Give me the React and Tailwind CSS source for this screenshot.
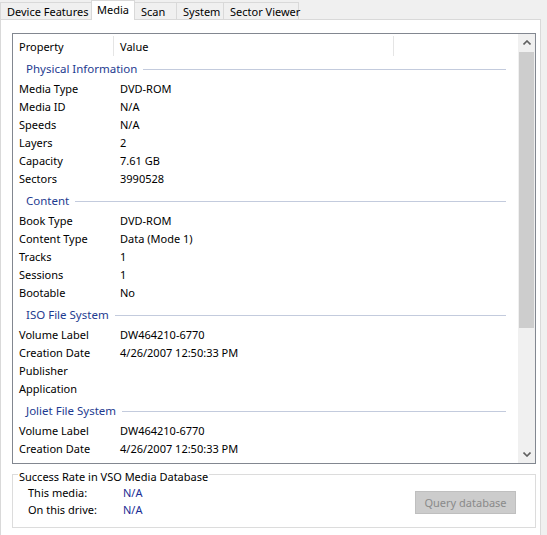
import React from 'react';

const tabs = [
  { label: 'Device Features', w: 'w-[92px]' },
  { label: 'Media', w: 'w-[44px]', active: true },
  { label: 'Scan', w: 'w-[43px]' },
  { label: 'System', w: 'w-[48px]' },
  { label: 'Sector Viewer', w: 'w-[76px]' },
];

const groups = [
  {
    title: 'Physical Information',
    rows: [
      ['Media Type', 'DVD-ROM'],
      ['Media ID', 'N/A'],
      ['Speeds', 'N/A'],
      ['Layers', '2'],
      ['Capacity', '7.61 GB'],
      ['Sectors', '3990528'],
    ],
  },
  {
    title: 'Content',
    rows: [
      ['Book Type', 'DVD-ROM'],
      ['Content Type', 'Data (Mode 1)'],
      ['Tracks', '1'],
      ['Sessions', '1'],
      ['Bootable', 'No'],
    ],
  },
  {
    title: 'ISO File System',
    rows: [
      ['Volume Label', 'DW464210-6770'],
      ['Creation Date', '4/26/2007 12:50:33 PM'],
      ['Publisher', ''],
      ['Application', ''],
    ],
  },
  {
    title: 'Joliet File System',
    rows: [
      ['Volume Label', 'DW464210-6770'],
      ['Creation Date', '4/26/2007 12:50:33 PM'],
    ],
  },
];

// tiny chevrons for the scrollbar buttons
const Chevron = ({ up }) => (
  <svg width="8" height="5" viewBox="0 0 8 5" className="block">
    <path d={up ? 'M0.5 4.5 L4 1 L7.5 4.5' : 'M0.5 0.5 L4 4 L7.5 0.5'} fill="none" stroke="#606060" strokeWidth="1.6" />
  </svg>
);

const App = () => {
  return (
    <div className="w-[547px] h-[535px] bg-[#f0f0f0] overflow-hidden font-['Noto_Sans',sans-serif] text-[11px] text-black">
      {/* Tab strip */}
      <div className="relative z-10 flex items-end h-[19px]">
        {tabs.map((t, i) =>
          t.active ? (
            <div
              key={t.label}
              className={`${t.w} h-[20px] -mb-px -ml-px bg-white border border-b-0 border-[#d9d9d9] pl-[5px] leading-[18px] whitespace-nowrap`}
            >
              {t.label}
            </div>
          ) : (
            <div
              key={t.label}
              className={`${t.w} h-[17px] ${i > 0 ? '-ml-px' : ''} bg-[#f0f0f0] border border-b-0 border-[#d9d9d9] pl-[6px] leading-[17px] whitespace-nowrap`}
            >
              {t.label}
            </div>
          )
        )}
      </div>

      {/* Tab panel */}
      <div className="w-[541px] h-[517px] bg-white border border-[#d9d9d9] pt-[13px] pl-[11px]">
        {/* Property list */}
        <div className="w-[524px] h-[431px] border border-[#828790] flex">
          <div className="flex-1 flex flex-col overflow-hidden">
            <div className="flex items-start h-[22px] shrink-0">
              <div className="w-[100px] pl-[6px] pt-[4px] leading-[18px]">Property</div>
              <div className="w-px h-[20px] mt-[2px] bg-[#e5e5e5]" />
              <div className="w-[279px] pl-[6px] pt-[4px] leading-[18px]">Value</div>
              <div className="w-px h-[20px] mt-[2px] bg-[#e5e5e5]" />
            </div>
            {groups.map((g) => (
              <div key={g.title} className="shrink-0">
                <div className="h-[24px] pt-[2px] pl-[13px] pr-[12px] flex items-center gap-[6px]">
                  <span className="text-[#1e3b90] text-[11.5px] leading-[18px] whitespace-nowrap">{g.title}</span>
                  <div className="flex-1 h-px bg-[#c3cbdd]" />
                </div>
                {g.rows.map(([k, v]) => (
                  <div key={g.title + k} className="flex h-[18px] items-center leading-[18px]">
                    <div className="w-[101px] pl-[6px] whitespace-nowrap">{k}</div>
                    <div className="pl-[6px] whitespace-nowrap">{v}</div>
                  </div>
                ))}
              </div>
            ))}
          </div>
          {/* Scrollbar */}
          <div className="w-[17px] bg-[#f0f0f0] flex flex-col">
            <div className="h-[17px] flex items-center justify-center">
              <Chevron up />
            </div>
            <div className="h-[276px] mt-px mx-px bg-[#cdcdcd]" />
            <div className="flex-1" />
            <div className="h-[17px] flex items-center justify-center">
              <Chevron />
            </div>
          </div>
        </div>

        {/* Success rate group */}
        <fieldset className="w-[524px] h-[64px] border border-[#dcdcdc]">
          <legend className="ml-[5px] px-[1px] pt-[6px] leading-[14px]">Success Rate in VSO Media Database</legend>
          <div className="flex justify-between items-start pl-[15px] pr-[19px]">
            <div className="pt-px">
              <div className="flex h-[17px] items-center">
                <div className="w-[95px]">This media:</div>
                <div className="text-[#1a2d94]">N/A</div>
              </div>
              <div className="flex h-[17px] items-center">
                <div className="w-[95px]">On this drive:</div>
                <div className="text-[#1a2d94]">N/A</div>
              </div>
            </div>
            <button
              disabled
              className="mt-[7px] w-[101px] h-[23px] bg-[#cccccc] border border-[#bfbfbf] text-[#8a8a8a] text-[11px] leading-[21px]"
            >
              Query database
            </button>
          </div>
        </fieldset>
      </div>
    </div>
  );
};

export default App;
